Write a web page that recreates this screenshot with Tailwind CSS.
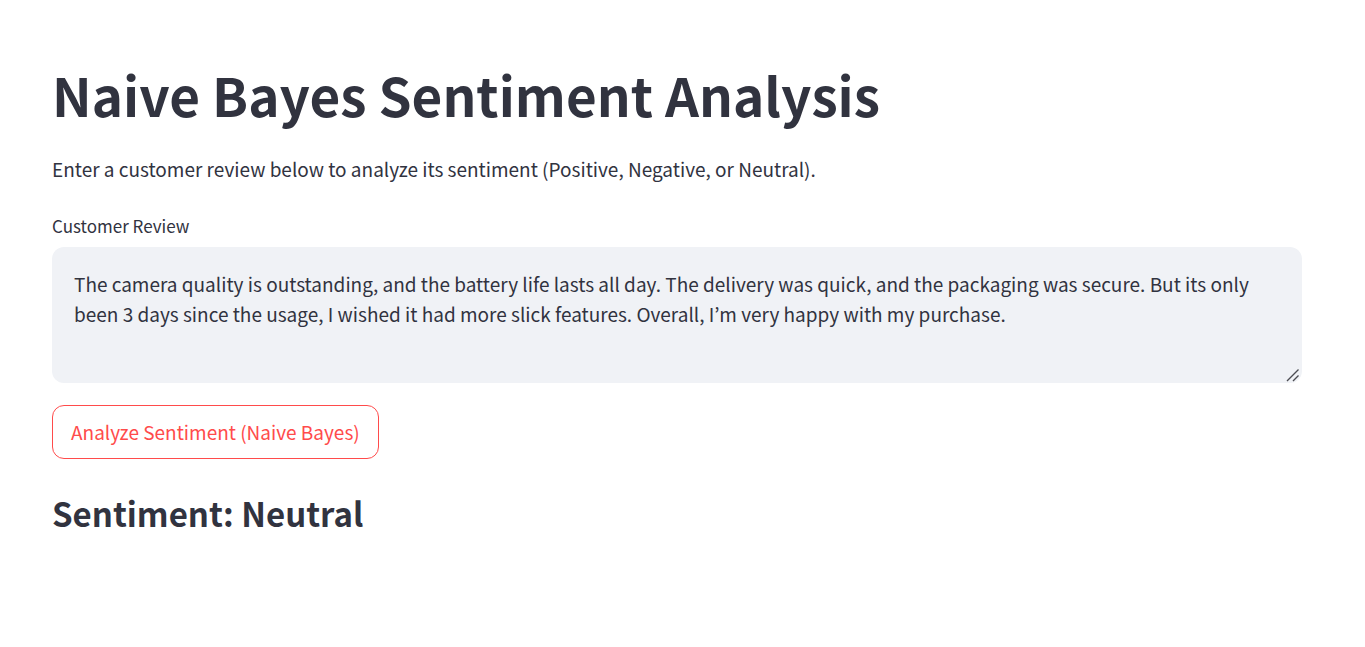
<!DOCTYPE html>
<html lang="en">
<head>
<meta charset="utf-8">
<meta name="viewport" content="width=device-width, initial-scale=1">
<title>Naive Bayes Sentiment Analysis</title>
<script src="https://cdn.jsdelivr.net/npm/@tailwindcss/browser@4"></script>
</head>
<body class="bg-white text-[#31333f] font-['Noto_Sans_CJK_KR',sans-serif]">
<main class="flex flex-col items-start pt-[61px] pl-[52px] pr-[63px]">
  <h1 class="text-[53px] leading-[66px] font-bold">Naive Bayes Sentiment Analysis</h1>
  <p class="mt-[27px] text-[19px] leading-[30px]">Enter a customer review below to analyze its sentiment (Positive, Negative, or Neutral).</p>
  <label for="review" class="mt-[30px] text-[17px] leading-6">Customer Review</label>
  <div class="relative mt-[9px] flex w-full">
    <textarea id="review" class="h-[136px] w-full resize-none rounded-xl bg-[#f0f2f6] px-[22px] py-[22px] text-[19px] leading-[30px] outline-none">The camera quality is outstanding, and the battery life lasts all day. The delivery was quick, and the packaging was secure. But its only been 3 days since the usage, I wished it had more slick features. Overall, I’m very happy with my purchase.</textarea>
    <svg class="pointer-events-none absolute right-0.5 bottom-px size-3.5" viewBox="0 0 14 14" fill="none" stroke="#4b4c52" stroke-width="1.4" aria-hidden="true"><path d="M1 13L12.5 1.5M7 13L12.5 7.5"/></svg>
  </div>
  <button type="button" class="mt-[22px] h-[54px] rounded-xl border border-[#ff4b4b] px-[18px] text-[19px] leading-[30px] text-[#ff4b4b]">Analyze Sentiment (Naive Bayes)</button>
  <h2 class="mt-8 text-[33px] leading-[44px] font-bold">Sentiment: Neutral</h2>
</main>
</body>
</html>
